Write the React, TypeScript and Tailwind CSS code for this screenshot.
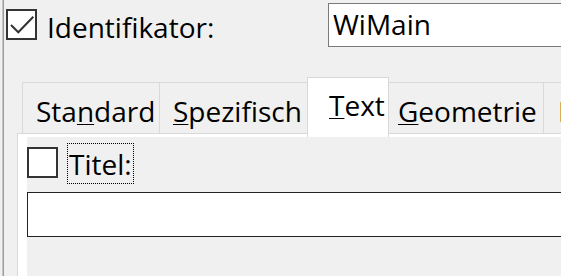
import React from 'react';

const Check = () => (
  <svg width="27" height="27" viewBox="0 0 27 27" fill="none">
    <polyline points="3,14 10.3,21.3 25.3,5.7" stroke="#333" strokeWidth="2" />
  </svg>
);

const tabs = [
  { pre: 'Sta', key: 'n', post: 'dard', w: 'w-[137px]', pad: 'pl-[13px]', border: 'border-l' },
  { pre: '', key: 'S', post: 'pezifisch', w: 'w-[148px]', pad: 'pl-[13px]', border: 'border-l' },
];

const App: React.FC = () => {
  return (
    <div
      className="w-[561px] h-[276px] bg-[#f0f0f0] overflow-hidden flex text-black text-[28px]"
      style={{ fontFamily: '"Open Sans", "Noto Sans", sans-serif' }}
    >
      {/* window edge */}
      <div className="ml-[2px] w-[1px] bg-[#c4c4c4] shrink-0" />
      <div className="w-[1px] bg-[#9c9c9c] shrink-0" />

      <div className="w-[620px] flex flex-col shrink-0">
        {/* Identifikator row */}
        <div className="flex items-start h-[77px] shrink-0">
          <div className="ml-[2px] mt-[9px] w-[31px] h-[31px] border-2 border-[#333] bg-white shrink-0">
            <Check />
          </div>
          <span className="ml-[10px] mt-[7px] h-[40px] leading-[40px] whitespace-nowrap w-[281px] shrink-0">
            Identifikator:
          </span>
          <div className="mt-[3px] h-[44px] flex-1 border border-[#7a7a7a] bg-white pl-[4px] leading-[41px] whitespace-nowrap">
            WiMain
          </div>
        </div>

        {/* Tab strip */}
        <div className="flex items-end ml-[18px] h-[56px] shrink-0 whitespace-nowrap">
          {tabs.map((t) => (
            <div
              key={t.key}
              className={`${t.w} ${t.pad} ${t.border} h-[51px] border-t border-[#d9d9d9] pt-[8px] leading-[40px] shrink-0`}
            >
              {t.pre}
              <span className="underline decoration-1 underline-offset-[2px]">{t.key}</span>
              {t.post}
            </div>
          ))}
          <div className="w-[82px] pl-[21px] h-[60px] -mb-[4px] relative z-10 bg-white border-l border-t border-r border-[#d9d9d9] pt-[7px] leading-[40px] shrink-0">
            <span className="underline decoration-1 underline-offset-[2px]">T</span>ext
          </div>
          <div className="w-[154px] pl-[9px] h-[51px] border-t border-[#d9d9d9] pt-[8px] leading-[40px] shrink-0">
            <span className="underline decoration-1 underline-offset-[2px]">G</span>eometrie
          </div>
          <div className="w-[160px] pl-[14px] h-[51px] border-l border-t border-[#d9d9d9] pt-[8px] leading-[40px] shrink-0">
            Darstellung
          </div>
        </div>

        {/* Tab panel */}
        <div className="ml-[13px] flex-1 flex flex-col border-l border-t border-[#d9d9d9] bg-white pl-[9px] pt-[3px] min-h-0">
          <div className="flex-1 bg-[#f0f0f0] pt-[6px] flex flex-col">
            <div className="flex items-start">
              <div className="mt-[4px] w-[31px] h-[31px] border-2 border-[#333] bg-white shrink-0" />
              <span className="ml-[9px] h-[41px] border border-dotted border-black pl-[1px] pr-[1px] pt-[1px] leading-[38px] whitespace-nowrap">
                Titel:
              </span>
            </div>
            <div className="mt-[8px] h-[45px] border border-[#222] bg-white" />
          </div>
        </div>
      </div>
    </div>
  );
};

export default App;
